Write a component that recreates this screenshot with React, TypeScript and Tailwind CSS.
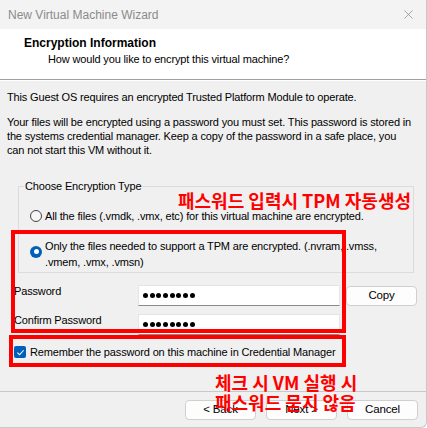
import { X } from "lucide-react";

const Dots = () => (
  <div className="flex gap-[1.7px] pl-[4px]">
    {Array.from({ length: 8 }).map((_, i) => (
      <span key={i} className="block size-[5px] rounded-full bg-black" />
    ))}
  </div>
);

const Button = ({ label }: { label: string }) => (
  <button className="w-[71px] h-[20px] rounded-[4px] border border-[#d0d0d0] bg-[#fdfdfd] text-[11.5px] text-black leading-none">
    {label}
  </button>
);

export default function App() {
  return (
    <div
      className="relative w-[427px] h-[428px] overflow-hidden bg-[#f0f0f0] text-[11px] tracking-[-0.15px] text-black border-r border-b border-[#c8c8c8] rounded-br-[6px]"
      style={{ fontFamily: '"Liberation Sans", Arial, sans-serif' }}
    >
      {/* Title bar */}
      <div className="h-[29px] flex items-center justify-between pl-[8px] pr-[10px] bg-[#f3f3f3] text-[#8b8b8b] text-[12px] tracking-normal">
        <span>New Virtual Machine Wizard</span>
        <X size={15} strokeWidth={1} className="text-[#777]" />
      </div>

      {/* Header */}
      <div className="h-[51px] bg-white pt-[6px] border-b border-[#a0a0a0]">
        <p className="pl-[24px] font-bold text-[12px] tracking-normal leading-[16px]">Encryption Information</p>
        <p className="pl-[48px] leading-[16px]">How would you like to encrypt this virtual machine?</p>
      </div>

      {/* Body */}
      <div className="px-[7px] pt-[9px] border-t border-white">
        <p className="leading-[14px]">This Guest OS requires an encrypted Trusted Platform Module to operate.</p>
        <p className="leading-[14px] mt-[11px] whitespace-nowrap">
          Your files will be encrypted using a password you must set. This password is stored in
          <br />
          the systems credential manager. Keep a copy of the password in a safe place, you
          <br />
          can not start this VM without it.
        </p>

        <fieldset className="mt-[22px] ml-[11px] mr-[5px] h-[94px] border border-[#dcdcdc] px-[11px] pt-[15px]">
          <legend className="px-[1px] ml-[-6px] leading-[14px]">Choose Encryption Type</legend>
          <label className="flex items-center gap-[3px]">
            <span className="size-[12px] rounded-full border border-[#444] bg-[#f7f7f7]" />
            <span className="whitespace-nowrap">All the files (.vmdk, .vmx, etc) for this virtual machine are encrypted.</span>
          </label>
          <label className="flex items-start gap-[3px] mt-[13px]">
            <span className="mt-[8px] size-[12px] rounded-full bg-[#005fb8] flex items-center justify-center">
              <span className="size-[5px] rounded-full bg-white" />
            </span>
            <span className="leading-[16px] whitespace-nowrap">
              Only the files needed to support a TPM are encrypted. (.nvram, .vmss,
              <br />
              .vmem, .vmx, .vmsn)
            </span>
          </label>
        </fieldset>

        {/* Password rows */}
        <div className="mt-[12px] grid grid-cols-[124px_202px_72px] items-center gap-y-[8px] pl-[7px]">
          <span className="leading-none -mt-[8px]">Password</span>
          <div className="h-[21px] bg-white border border-[#e5e5e5] border-b-[#8a8a8a] flex items-center">
            <Dots />
          </div>
          <div className="pl-[6px]">
            <Button label="Copy" />
          </div>
          <span className="leading-none -mt-[8px]">Confirm Password</span>
          <div className="h-[21px] bg-white border border-[#e5e5e5] border-b-[#8a8a8a] flex items-center">
            <Dots />
          </div>
          <div />
        </div>

        <label className="mt-[9px] ml-[7px] flex items-center gap-[4px]">
          <span className="size-[12px] rounded-[2px] bg-[#005fb8] flex items-center justify-center">
            <svg width="9" height="9" viewBox="0 0 10 10" fill="none">
              <path d="M1.5 5.2 L4 7.5 L8.5 2.5" stroke="white" strokeWidth="1.2" />
            </svg>
          </span>
          <span className="whitespace-nowrap">Remember the password on this machine in Credential Manager</span>
        </label>
      </div>

      {/* Footer */}
      <div className="absolute left-0 right-0 bottom-0 h-[36px] border-t border-[#c8c8c8] flex items-start justify-end gap-[10px] pt-[8px] pr-[8px]">
        <Button label="< Back" />
        <Button label="Next >" />
        <Button label="Cancel" />
      </div>

      {/* Annotations */}
      <div className="absolute left-[11px] top-[230px] w-[335px] h-[103px] border-[4px] border-[#ff0000]" />
      <div className="absolute left-[9px] top-[335px] w-[337px] h-[32px] border-[4px] border-[#ff0000]" />
      <p
        className="absolute left-[178px] top-[189px] text-[18px] font-bold leading-[22px] tracking-normal text-[#ff0000] whitespace-nowrap"
        style={{ fontFamily: '"Noto Sans CJK KR", sans-serif' }}
      >
        패스워드 입력시 TPM 자동생성
      </p>
      <p
        className="absolute left-[215px] top-[372px] text-[18px] font-bold leading-[20px] tracking-normal text-[#ff0000] whitespace-nowrap"
        style={{ fontFamily: '"Noto Sans CJK KR", sans-serif' }}
      >
        체크 시 VM 실행 시
        <br />
        패스워드 묻지 않음
      </p>
    </div>
  );
}
